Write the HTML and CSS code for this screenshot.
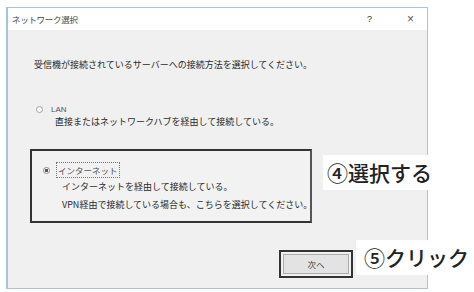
FILE: index.html
```html
<!DOCTYPE html>
<html lang="ja">
<head>
<meta charset="utf-8">
<link rel="stylesheet" href="styles.css">
</head>
<body>
<div class="page">
  <div class="dialog">
    <div class="titlebar">
      <span class="title">ネットワーク選択</span>
      <span class="help">?</span>
      <span class="close">×</span>
    </div>
    <div class="content">
      <p class="lead">受信機が接続されているサーバーへの接続方法を選択してください。</p>
      <div class="option">
        <span class="radio"></span>
        <span class="opt-label">LAN</span>
      </div>
      <p class="desc">直接またはネットワークハブを経由して接続している。</p>
      <div class="selbox">
        <div class="option">
          <span class="radio checked"></span>
          <span class="opt-label focus">インターネット</span>
        </div>
        <p class="desc">インターネットを経由して接続している。</p>
        <p class="desc">VPN経由で接続している場合も、こちらを選択してください。</p>
      </div>
      <div class="footer">
        <div class="btn-ring"><div class="btn">次へ</div></div>
      </div>
    </div>
  </div>
  <div class="note note-select">④選択する</div>
  <div class="note note-click">⑤クリック</div>
</div>
</body>
</html>
```
FILE: styles.css
```css
* { box-sizing: border-box; }
html, body { margin: 0; padding: 0; background: #fff; }
body {
  width: 474px; height: 292px; overflow: hidden;
  font-family: "Noto Sans CJK JP", "Noto Sans", sans-serif;
  color: #2a2a2a;
}
.page { position: relative; width: 474px; height: 292px; padding: 7px 0 0 6px; }
.dialog {
  width: 422px; height: 282px;
  border: 1px solid #a9c4da;
  border-left-width: 2px;
  display: flex; flex-direction: column;
  background: #f0f0f0;
}
.titlebar {
  height: 22px; background: #fff;
  display: flex; align-items: center;
  padding-left: 4px;
  font-size: 8.5px;
}
.title { flex: 1; letter-spacing: -0.3px; color: #444; }
.help { width: 40px; font-size: 9px; color: #333; font-family: "Liberation Sans", sans-serif; }
.close { width: 20px; font-size: 12px; color: #555; font-family: "Liberation Sans", sans-serif; }
.content { flex: 1; display: flex; flex-direction: column; padding: 0 0 0 22px; font-size: 9px; }
p { margin: 0; line-height: 12px; white-space: nowrap; }
.lead { margin-top: 29px; padding-left: 4px; }
.option { display: flex; align-items: center; height: 12px; margin-top: 32px; padding-left: 6px; }
.radio {
  width: 7px; height: 7px; border-radius: 50%;
  border: 1px solid #a0a0a0; background: #fff;
  margin-right: 8px;
}
.radio.checked { background: radial-gradient(circle, #555 0 1.6px, #fff 2px); border-color: #888; }
.opt-label { font-family: "Liberation Sans", "Noto Sans CJK JP", sans-serif; font-size: 8px; color: #555; }
.option + .desc { margin-top: 1px; }
.desc { padding-left: 25px; }
.selbox {
  margin-top: 21px; margin-left: 0;
  width: 282px; height: 74px;
  border: 2px solid #333;
  border-right-color: #555;
  background: #f2f2f2;
}
.selbox .option { margin-top: 13px; padding-left: 11px; }
.selbox .opt-label { font-family: "Noto Sans CJK JP", sans-serif; font-size: 8.5px; }
.focus { outline: 1px dotted #777; outline-offset: 1px; }
.selbox .desc { padding-left: 30px; }
.selbox .option + .desc { margin-top: 5px; }
.selbox .desc + .desc { margin-top: 6px; }
.footer { margin-top: 27px; display: flex; padding-left: 249px; }
.btn-ring { width: 74px; height: 28px; border: 2px solid #333; padding: 2px; }
.btn {
  height: 100%; border: 1px solid #adadad; background: #e3e3e3;
  display: flex; align-items: center; justify-content: center;
  font-size: 8.5px; color: #444;
}
.note {
  position: absolute; background: #fff;
  font-size: 21px; font-weight: 500; color: #222;
  display: flex; align-items: center; line-height: 1;
}
.note-select { left: 323px; top: 155px; width: 118px; height: 35px; padding-left: 4px; }
.note-click { left: 356px; top: 240px; width: 118px; height: 35px; padding-left: 8px; }
```
